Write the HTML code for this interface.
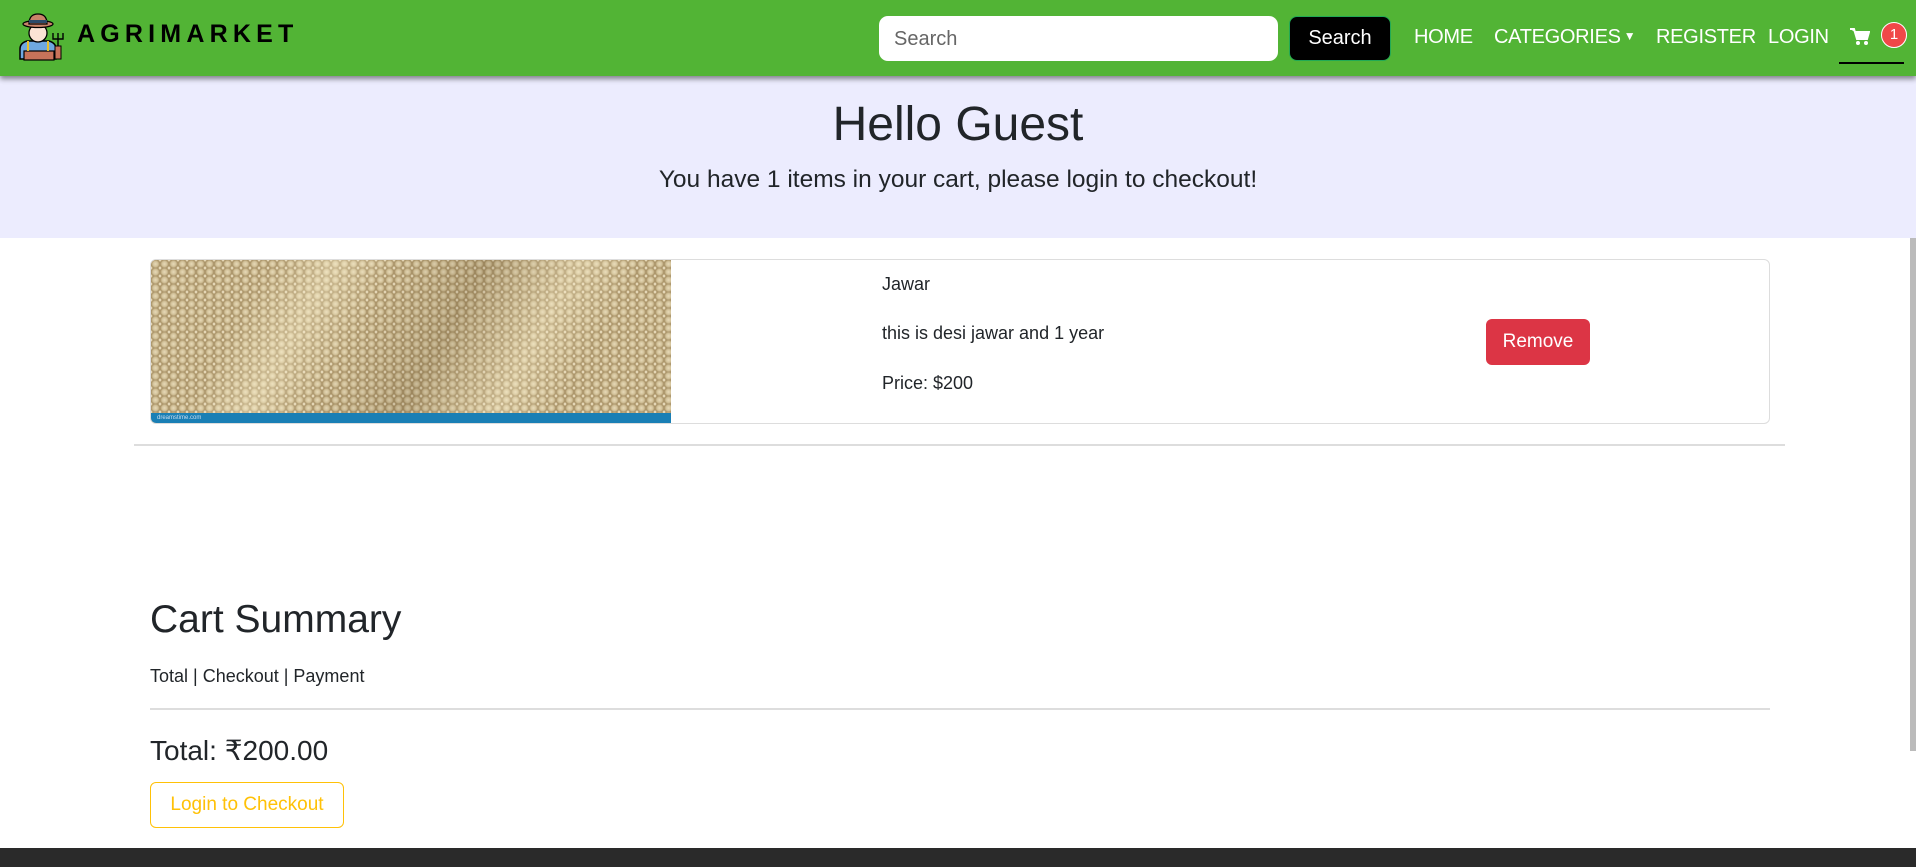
<!DOCTYPE html>
<html><head><meta charset="utf-8"><style>
*{box-sizing:border-box;margin:0;padding:0}
body{width:1916px;height:867px;overflow:hidden;background:#fff;font-family:"Liberation Sans",sans-serif;color:#212529;position:relative}
.nav{position:absolute;left:0;top:0;width:1916px;height:76px;background:#52b435;box-shadow:0 3px 5px rgba(0,0,0,.45);z-index:2}
.brand{position:absolute;left:77px;top:20px;font-weight:bold;font-size:25px;letter-spacing:5.2px;color:#000}
.search{position:absolute;left:879px;top:16px;width:399px;height:45px;background:#fff;border-radius:9px;font-size:20px;color:#666;padding:12px 15px}
.sbtn{position:absolute;left:1289px;top:16px;width:102px;height:45px;background:#000;border-radius:8px;border:1px solid #2a5;color:#fff;font-size:20px;text-align:center;line-height:43px}
.nl{position:absolute;top:26px;color:#fff;font-size:20px;letter-spacing:-0.3px}
.hero{position:absolute;top:76px;left:0;width:1916px;height:162px;background:#ececfe;text-align:center}
.card{position:absolute;left:150px;top:259px;width:1620px;height:165px;border:1px solid #ddd;border-radius:6px;overflow:hidden}
.img{position:absolute;left:0;top:0;width:520px;height:164px;background:#c9b48a;background-image:linear-gradient(120deg,rgba(255,240,200,0) 20%,rgba(255,245,210,.35) 30%,rgba(0,0,0,0) 40%,rgba(60,40,10,.15) 55%,rgba(255,245,210,.3) 70%,rgba(0,0,0,0) 80%),radial-gradient(circle at 50% 50%,#e6d9b8 0,#d3c29a 2.5px,#a48d62 4.5px,transparent 5px),radial-gradient(circle at 50% 50%,#efe4c8 0,#cdb98f 2.5px,#9a8157 4.5px,transparent 5px);background-size:100% 100%,9px 8px,9px 8px;background-position:0 0,0 0,4.5px 4px}
.bar{position:absolute;left:0;bottom:0;width:520px;height:10px;background:#1a7fb5;color:#cde;font-size:6px;padding:2px 6px}
.t{position:absolute;left:731px;font-size:18px;color:#212529}
</style></head><body>
<div class="nav">
<svg style="position:absolute;left:15px;top:11px" width="50" height="52" viewBox="0 0 50 52">
<path d="M5 48 V38 q0-6 7-8 h22 q7 2 7 8 v10z" fill="#6fa8e0" stroke="#000" stroke-width="1.5"/>
<rect x="9" y="40" width="30" height="9" fill="#c8735a" stroke="#000" stroke-width="1.2"/>
<path d="M13 30 v10 M33 30 v10" stroke="#e8c030" stroke-width="2"/>
<circle cx="23" cy="22" r="9" fill="#fbe3d4" stroke="#000" stroke-width="1.3"/>
<ellipse cx="23" cy="13" rx="15" ry="3.5" fill="#c8836a" stroke="#000" stroke-width="1.3"/>
<path d="M14 13 q0-10 9-10 q9 0 9 10z" fill="#c8836a" stroke="#000" stroke-width="1.3"/>
<rect x="14" y="9" width="18" height="3" fill="#2a4a6a"/>
<path d="M43 25 v23 M38 22 v6 h10 v-6 M43 22 v6" stroke="#000" stroke-width="1.4" fill="none"/>
<rect x="40" y="35" width="6" height="13" fill="#c8735a" stroke="#000"/>
</svg>
<div class="brand">AGRIMARKET</div>
<div class="search">Search</div>
<div class="sbtn">Search</div>
<div class="nl" style="left:1414px">HOME</div>
<div class="nl" style="left:1494px">CATEGORIES<span style="font-size:12px;vertical-align:3px"> ▼</span></div>
<div class="nl" style="left:1656px">REGISTER</div>
<div class="nl" style="left:1768px">LOGIN</div>
<svg style="position:absolute;left:1850px;top:28px" width="20" height="18" viewBox="0 0 20 18"><path d="M0 1h4l3 10h10l2-7H5" fill="#fff" stroke="#fff" stroke-width="2"/><circle cx="8" cy="15" r="2" fill="#fff"/><circle cx="16" cy="15" r="2" fill="#fff"/></svg>
<div style="position:absolute;left:1881px;top:22px;width:26px;height:26px;border-radius:50%;background:#f04848;border:1px solid #fff;color:#fff;font-size:15px;text-align:center;line-height:24px">1</div>
<div style="position:absolute;left:1839px;top:62px;width:65px;height:2px;background:#000"></div>
</div>
<div style="position:absolute;right:0;top:76px;width:6px;height:675px;background:#bbb"></div>
<div class="hero">
<div style="font-size:48px;margin-top:21px">Hello Guest</div>
<div style="font-size:24.5px;margin-top:14px">You have 1 items in your cart, please login to checkout!</div>
</div>
<div class="card">
<div class="img"></div><div class="bar">dreamstime.com</div>
<div class="t" style="top:14px">Jawar</div>
<div class="t" style="top:63px">this is desi jawar and 1 year</div>
<div class="t" style="top:113px">Price: $200</div>
<div style="position:absolute;left:1335px;top:59px;width:104px;height:46px;background:#dc3545;border-radius:6px;color:#fff;font-size:19px;text-align:center;line-height:46px">Remove</div>
</div>
<div style="position:absolute;left:134px;top:444px;width:1651px;height:2px;background:#ddd"></div>
<div style="position:absolute;left:150px;top:598px;font-size:39px">Cart Summary</div>
<div style="position:absolute;left:150px;top:666px;font-size:18px">Total | Checkout | Payment</div>
<div style="position:absolute;left:150px;top:708px;width:1620px;height:2px;background:#ddd"></div>
<div style="position:absolute;left:150px;top:734px;font-size:28px">Total: ₹200.00</div>
<div style="position:absolute;left:150px;top:782px;width:194px;height:46px;border:1px solid #ffc107;border-radius:6px;color:#ffc107;font-size:19px;text-align:center;line-height:44px">Login to Checkout</div>
<div style="position:absolute;left:0;top:848px;width:1916px;height:19px;background:#2a2a2a"></div>
</body></html>
